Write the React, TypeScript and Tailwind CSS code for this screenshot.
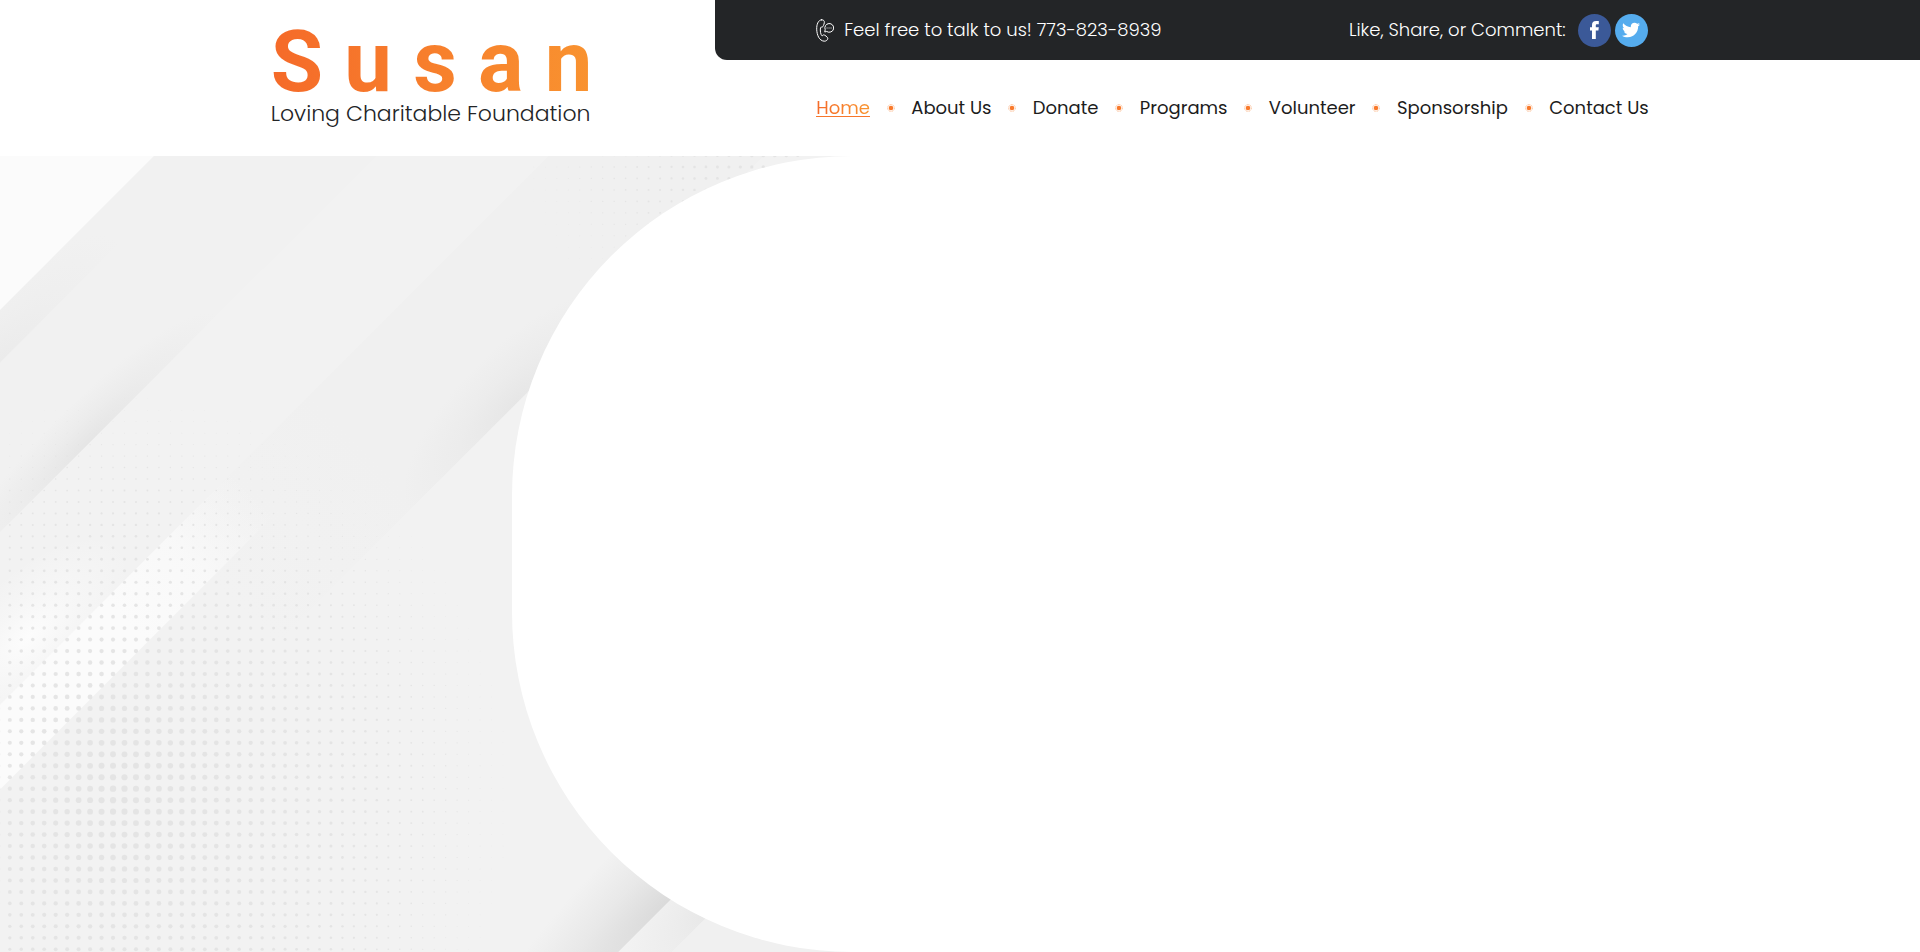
import React from "react";
import { FaTwitter } from "react-icons/fa";

const links = ["Home", "About Us", "Donate", "Programs", "Volunteer", "Sponsorship", "Contact Us"];

const STEP = 11.47;

type Dot = { x: number; y: number; r: number };

function lowerDots(): Dot[] {
  const dots: Dot[] = [];
  for (let i = -1; i < 46; i++) {
    for (let j = -22; j < 36; j++) {
      const x = 9.8 + i * STEP;
      const y = 403.3 + j * STEP;
      const dx = (x - 115) / (x < 115 ? 300 : 420);
      const dy = (y - 635) / (y < 635 ? 420 : 440);
      const r = 3.2 * (1 - Math.sqrt(dx * dx + dy * dy));
      if (y > 0 && r > 0.2) dots.push({ x, y, r });
    }
  }
  return dots;
}

function upperDots(): Dot[] {
  const dots: Dot[] = [];
  for (let i = 0; i < 26; i++) {
    for (let j = 0; j < 16; j++) {
      const x = 568.3 + (i - 5) * STEP;
      const y = -0.5 + j * STEP;
      const r = 1.8 * (1 - Math.hypot((x - 770) / 270, y / 200));
      if (r > 0.15) dots.push({ x, y, r });
    }
  }
  return dots;
}

const dots = [...lowerDots(), ...upperDots()];

function Shade({ id, color, a, b, rx, ry }: { id: string; color: string; a: number; b: number; rx: number; ry: number }) {
  return (
    <radialGradient id={id} gradientUnits="userSpaceOnUse" cx="0" cy="0" r="1" gradientTransform={`translate(${a} ${b}) scale(${rx} ${ry})`}>
      <stop offset="0" stopColor={color} />
      <stop offset="0.5" stopColor={color} stopOpacity="0.4" />
      <stop offset="1" stopColor={color} stopOpacity="0" />
    </radialGradient>
  );
}

function Backdrop() {
  return (
    <svg aria-hidden="true" className="absolute inset-0 h-full w-full" viewBox="0 0 1920 796" preserveAspectRatio="xMinYMin slice">
      <defs>
        <Shade id="s1" color="#ebebeb" a={-146} b={146} rx={170} ry={60} />
        <Shade id="s2" color="#e5e5e5" a={-140} b={266} rx={180} ry={40} />
        <Shade id="s3" color="#e6e6e6" a={190} b={540} rx={150} ry={55} />
        <Shade id="s4" color="#dadada" a={-60} b={1000} rx={280} ry={75} />
        <Shade id="s5" color="#e4e4e4" a={-10} b={1038} rx={130} ry={60} />
        <Shade id="glow" color="#fcfcfc" a={-320} b={360} rx={130} ry={60} />
        <linearGradient id="beam" gradientUnits="userSpaceOnUse" x1="-240" x2="-60" y1="0" y2="0">
          <stop offset="0" stopColor="#fbfbfb" />
          <stop offset="0.5" stopColor="#fafafa" stopOpacity="0.8" />
          <stop offset="1" stopColor="#f8f8f8" stopOpacity="0" />
        </linearGradient>
        <linearGradient id="panel" gradientUnits="userSpaceOnUse" x1="-150" x2="50" y1="0" y2="0">
          <stop offset="0" stopColor="#f2f2f2" />
          <stop offset="1" stopColor="#f0f0f0" />
        </linearGradient>
      </defs>
      <rect width="1920" height="796" fill="#f2f2f2" />
      <g transform="rotate(-45)">
        <rect x="-600" y="0" width="1200" height="109" fill="#fbfbfb" />
        <rect x="-600" y="109" width="1200" height="157" fill="#f1f1f1" />
        <rect x="-600" y="109" width="1200" height="37" fill="url(#s1)" />
        <rect x="-600" y="146" width="1200" height="120" fill="url(#s2)" />
        <rect x="-600" y="388" width="1400" height="152" fill="url(#panel)" />
        <rect x="-600" y="266" width="1000" height="122" fill="url(#glow)" />
        <rect x="-600" y="388" width="600" height="60" fill="url(#beam)" />
        <rect x="-600" y="388" width="1400" height="152" fill="url(#s3)" />
        <rect x="-600" y="700" width="1200" height="300" fill="url(#s4)" />
        <rect x="-600" y="1000" width="1200" height="38" fill="url(#s5)" />
        <rect x="-600" y="1038" width="1200" height="300" fill="#f0f0f0" />
      </g>
      <g fill="#e2e2e2" fillOpacity="0.9">
        {dots.map((d, i) => (
          <circle key={i} cx={d.x} cy={d.y} r={d.r} />
        ))}
      </g>
    </svg>
  );
}

function PhoneIcon() {
  return (
    <svg aria-hidden="true" className="h-[23px] w-[18px] shrink-0" viewBox="0 0 18 23" fill="none" stroke="#fff" strokeWidth="1" strokeLinejoin="round" strokeLinecap="round">
      <path d="M5.4 0.8C2 1.2 0.6 5.5 0.7 10.2C0.9 16 3.2 21.8 8.2 22.2C10.3 22.3 11.6 21 11.8 19.3C11.9 18.3 8.6 15.6 7.4 15.9C6.8 16.1 6.6 17 6.1 16.9C4.5 15.6 4 11.5 4.5 8.7C4.8 7.6 6.2 8.6 6.8 7.7C7.7 6.3 8.6 3.9 8.3 2.6C8 1.2 6.6 0.6 5.4 0.8Z" />
      <path d="M8.8 12.6L9.2 10.6A4.4 4.4 0 1 1 11 12.7Z" />
      <path d="M11 9h.1M13 9h.1M15 9h.1" strokeWidth="1" />
    </svg>
  );
}

function FacebookIcon() {
  return (
    <svg aria-hidden="true" className="h-[18px] w-[9px]" viewBox="0 0 9 18" fill="currentColor">
      <path d="M2 18V9.4H0V6.2H2V4.2C2 1.4 3.3 0 6.1 0H8.8V3.2H7.1C6 3.2 5.8 3.6 5.8 4.5V6.2H8.8L8.4 9.4H5.8V18Z" />
    </svg>
  );
}

function Separator() {
  return (
    <svg aria-hidden="true" className="h-2 w-2 shrink-0" viewBox="0 0 8 8">
      <circle cx="4" cy="4" r="3.4" fill="none" stroke="#fbb98c" strokeWidth="1" strokeDasharray="1 0.6" />
      <circle cx="4" cy="4" r="2.3" fill="#f97a2c" />
    </svg>
  );
}

export default function App() {
  return (
    <div className="flex min-h-screen flex-col bg-white font-['Poppins','Inter',sans-serif] text-[#1c1c1c]">
      <header className="flex min-h-[156px]">
        <a href="#home" className="block w-[37.24%] shrink-0 pt-6 pl-[14.1%]">
          <span className="block w-max bg-linear-to-r from-[#f56a29] to-[#f99530] bg-clip-text font-['Roboto',sans-serif] text-[85px] leading-[76px] font-bold tracking-[0.25em] text-transparent">
            Susan
          </span>
          <span className="block text-[22px] leading-7 font-light whitespace-nowrap text-[#232527]">Loving Charitable Foundation</span>
        </a>
        <div className="flex flex-1 flex-col">
          <div className="flex h-[60px] items-center justify-between rounded-bl-xl bg-[#232527] pr-[22.6%] pl-[8.4%] text-lg font-light text-white">
            <a href="tel:773-823-8939" className="flex items-center gap-2.5 whitespace-nowrap">
              <PhoneIcon />
              Feel free to talk to us! 773-823-8939
            </a>
            <div className="flex items-center gap-1">
              <span className="mr-2 whitespace-nowrap">Like, Share, or Comment:</span>
              <a href="#facebook" aria-label="Facebook" className="flex size-[33px] items-center justify-center rounded-full bg-[#3b5998]">
                <FacebookIcon />
              </a>
              <a href="#twitter" aria-label="Twitter" className="flex size-[33px] items-center justify-center rounded-full bg-[#55acee]">
                <FaTwitter className="size-[18px]" />
              </a>
            </div>
          </div>
          <nav className="flex h-24 items-center justify-between pr-[22.5%] pl-[8.4%] text-lg">
            {links.map((label, i) => (
              <React.Fragment key={label}>
                {i > 0 && <Separator />}
                <a href="#" className={i === 0 ? "bg-linear-to-r from-[#f56a29] to-[#f99530] bg-clip-text whitespace-nowrap text-transparent underline decoration-[#f7762b] underline-offset-2" : "whitespace-nowrap"}>
                  {label}
                </a>
              </React.Fragment>
            ))}
          </nav>
        </div>
      </header>
      <main className="relative flex flex-1 overflow-hidden">
        <Backdrop />
        <div className="relative ml-[26.67%] flex-1 rounded-l-[340px] bg-white" />
      </main>
    </div>
  );
}
